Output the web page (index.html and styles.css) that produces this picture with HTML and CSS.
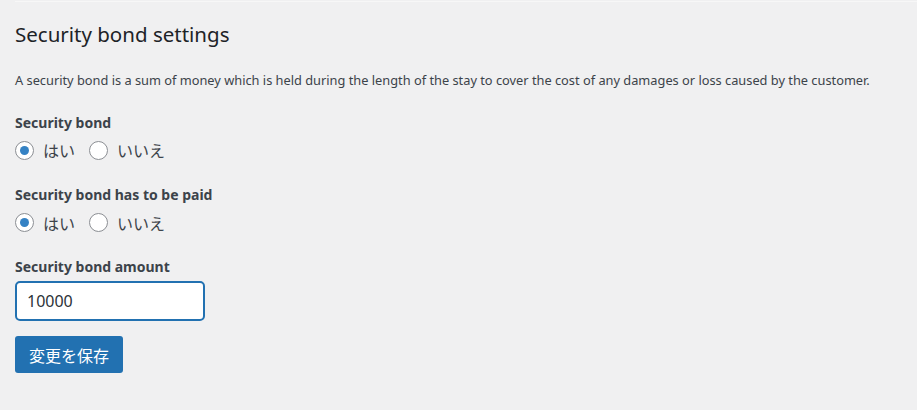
FILE: index.html
```html
<!DOCTYPE html>
<html lang="ja">
<head>
  <meta charset="UTF-8" />
  <title>Security bond settings</title>
  <link rel="stylesheet" href="styles.css">
</head>
<body>
  <div class="wrap">
    <form class="settings-form">
      <h2 class="settings-title">Security bond settings</h2>
      <p class="settings-description">A security bond is a sum of money which is held during the length of the stay to cover the cost of any damages or loss caused by the customer.</p>

      <!-- Security bond -->
      <div class="field">
        <p class="field-label">Security bond</p>
        <div class="radio-row">
          <label class="radio"><input type="radio" name="bond" checked />はい</label>
          <label class="radio"><input type="radio" name="bond" />いいえ</label>
        </div>
      </div>

      <!-- Paid -->
      <div class="field field-paid">
        <p class="field-label">Security bond has to be paid</p>
        <div class="radio-row">
          <label class="radio"><input type="radio" name="paid" checked />はい</label>
          <label class="radio"><input type="radio" name="paid" />いいえ</label>
        </div>
      </div>

      <!-- Amount -->
      <div class="field field-amount">
        <label class="field-label" for="amount">Security bond amount</label>
        <input class="text-input" type="text" id="amount" name="amount" value="10000" />
      </div>

      <button type="submit" class="btn-primary">変更を保存</button>
    </form>
  </div>
</body>
</html>
```

FILE: styles.css
```css
* {
  margin: 0;
  padding: 0;
  box-sizing: border-box;
}

body {
  background-color: #f0f0f1;
  color: #3c434a;
  font-family: "Noto Sans", "Noto Sans CJK JP", sans-serif;
  font-size: 13px;
  line-height: 1.4;
}

.wrap {
  margin-left: 15px;
  border-top: 1px solid #f7f7f7;
  margin-top: 1px;
}

.settings-form {
  padding-top: 19px;
}

.settings-title {
  font-size: 20.5px;
  font-weight: 400;
  color: #1d2327;
  line-height: 1.3;
  margin-bottom: 24px;
}

.settings-description {
  font-size: 12.8px;
  margin-bottom: 23px;
}

.field {
  margin-bottom: 23px;
}

.field-label {
  display: block;
  font-size: 14px;
  font-weight: 700;
  color: #3c434a;
  margin-bottom: 6px;
}

.field-paid {
  margin-bottom: 22px;
}

.field-amount {
  margin-bottom: 22px;
}

.field-amount .field-label {
  margin-bottom: 5px;
}

.radio-row {
  display: flex;
  gap: 14px;
  height: 24px;
}

.radio {
  display: flex;
  align-items: center;
  gap: 9px;
  font-size: 16px;
  font-family: "Noto Sans CJK JP", sans-serif;
  color: #3c434a;
}

.radio input {
  appearance: none;
  width: 19px;
  height: 19px;
  border: 1px solid #8c8f94;
  border-radius: 50%;
  background: #fff;
  display: grid;
  place-content: center;
}

.radio input:checked::before {
  content: "";
  width: 9px;
  height: 9px;
  border-radius: 50%;
  background: #3582c4;
}

.text-input {
  display: block;
  width: 190px;
  height: 40px;
  padding: 0 10px;
  border: 2px solid #2271b1;
  border-radius: 5px;
  background: #fff;
  color: #2c3338;
  font-family: "Noto Sans", sans-serif;
  font-size: 16px;
}

.btn-primary {
  margin-top: -7px;
  background-color: #2271b1;
  color: #fff;
  border: none;
  border-radius: 3px;
  padding: 0 14px;
  height: 37px;
  font-family: "Noto Sans CJK JP", sans-serif;
  font-size: 16px;
  cursor: pointer;
}
```
